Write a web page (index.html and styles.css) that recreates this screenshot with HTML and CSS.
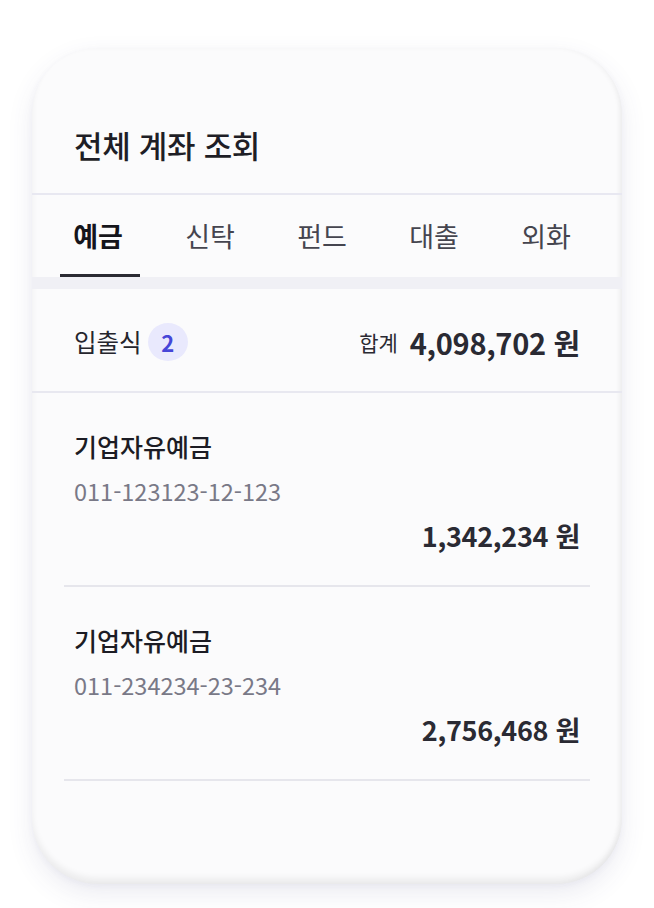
FILE: index.html
```html
<!DOCTYPE html>
<html lang="ko">
<head>
<meta charset="utf-8">
<link rel="stylesheet" href="styles.css">
</head>
<body>
<div class="card">
  <header class="card-header">
    <h1 class="title">전체 계좌 조회</h1>
  </header>
  <nav class="tabs">
    <div class="tab active">예금</div>
    <div class="tab">신탁</div>
    <div class="tab">펀드</div>
    <div class="tab">대출</div>
    <div class="tab">외화</div>
  </nav>
  <div class="band"></div>
  <div class="summary">
    <div class="summary-left">
      <span class="label">입출식</span>
      <span class="badge">2</span>
    </div>
    <div class="summary-right">
      <span class="sum-label">합계</span>
      <span class="sum-value">4,098,702 원</span>
    </div>
  </div>
  <ul class="list">
    <li class="item">
      <div class="name">기업자유예금</div>
      <div class="acct">011-123123-12-123</div>
      <div class="amount">1,342,234 원</div>
    </li>
    <li class="item">
      <div class="name">기업자유예금</div>
      <div class="acct">011-234234-23-234</div>
      <div class="amount">2,756,468 원</div>
    </li>
  </ul>
</div>
</body>
</html>
```
FILE: styles.css
```css
* { box-sizing: border-box; }
html, body { margin: 0; padding: 0; background: #ffffff; }
body {
  font-family: "Noto Sans CJK KR", "Noto Sans", sans-serif;
  color: #1c1c24;
  width: 654px;
  height: 908px;
  overflow: hidden;
}
.card {
  margin: 48px 0 0 32px;
  width: 590px;
  height: 836px;
  background: #fbfbfc;
  border-radius: 66px;
  overflow: hidden;
  box-shadow: 0 10px 26px rgba(70, 70, 130, 0.10),
              0 2px 6px rgba(70, 70, 130, 0.05),
              inset 0 -6px 6px rgba(0, 0, 0, 0.06),
              inset -3px 0 4px rgba(0, 0, 0, 0.03);
}
.card-header {
  height: 147px;
  padding: 48px 42px 0;
  display: flex;
  align-items: center;
  border-bottom: 2px solid #e8e8f1;
}
.title {
  margin: 0;
  font-size: 31px;
  line-height: 40px;
  font-weight: 500;
  letter-spacing: -0.3px;
  color: #1e1e26;
}
.tabs {
  display: flex;
  gap: 32px;
  padding: 0 26px 0 28px;
  height: 82px;
}
.tab {
  width: 80px;
  display: flex;
  align-items: center;
  justify-content: center;
  font-size: 27px;
  line-height: 36px;
  font-weight: 400;
  color: #45454f;
  border-bottom: 3px solid transparent;
  padding: 3px 4px 0 0;
}
.tab.active {
  font-weight: 700;
  color: #15151b;
  border-bottom-color: #2a2a32;
}
.band {
  height: 12px;
  background: #f0f0f5;
}
.summary {
  height: 104px;
  padding: 4px 42px 0;
  display: flex;
  align-items: center;
  justify-content: space-between;
  border-bottom: 2px solid #e8e8f0;
}
.summary-left { display: flex; align-items: center; gap: 6px; }
.label { font-size: 24.5px; line-height: 34px; color: #25252d; }
.badge {
  width: 40px;
  height: 38px;
  border-radius: 50%;
  background: #e9e9fd;
  color: #4646d8;
  font-size: 22px;
  font-weight: 700;
  display: flex;
  align-items: center;
  justify-content: center;
}
.summary-right { display: flex; align-items: center; gap: 12px; }
.sum-label { font-size: 21px; line-height: 30px; color: #2a2a33; }
.sum-value { font-size: 29px; line-height: 38px; font-weight: 700; color: #2a2a33; letter-spacing: -0.3px; }
.list {
  list-style: none;
  margin: 0 32px;
  padding: 0;
}
.item {
  padding: 36px 10px 31px;
  border-bottom: 2px solid #e6e6ec;
  display: flex;
  flex-direction: column;
}
.name {
  font-size: 25px;
  font-weight: 500;
  line-height: 34px;
  color: #1c1c24;
}
.acct {
  font-size: 23.5px;
  line-height: 32px;
  margin-top: 12px;
  color: #797987;
}
.amount {
  align-self: flex-end;
  font-size: 27px;
  font-weight: 700;
  line-height: 36px;
  margin-top: 11px;
  color: #2a2a33;
  letter-spacing: -0.3px;
}
```
